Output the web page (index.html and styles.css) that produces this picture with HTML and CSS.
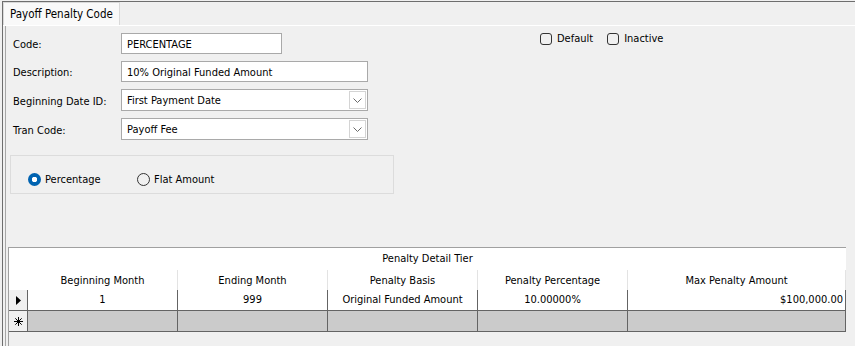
FILE: index.html
```html
<!DOCTYPE html>
<html>
<head>
    <title>Payoff Penalty Code</title>
    <link rel="stylesheet" href="styles.css">
</head>
<body>
    <div class="frame">
        <div class="tabs">
            <div class="tab">Payoff Penalty Code</div>
        </div>
        <div class="page">
            <div class="top">
                <div class="fields">
                    <label>Code:</label>
                    <div class="box code">PERCENTAGE</div>
                    <label>Description:</label>
                    <div class="box wide">10% Original Funded Amount</div>
                    <label>Beginning Date ID:</label>
                    <div class="box wide combo">First Payment Date
                        <span class="drop"><svg width="9" height="5" viewBox="0 0 9 5"><path d="M0.5 0.5 L4.5 4.5 L8.5 0.5" fill="none" stroke="#6a6a6a" stroke-width="1"/></svg></span>
                    </div>
                    <label>Tran Code:</label>
                    <div class="box wide combo">Payoff Fee
                        <span class="drop"><svg width="9" height="5" viewBox="0 0 9 5"><path d="M0.5 0.5 L4.5 4.5 L8.5 0.5" fill="none" stroke="#6a6a6a" stroke-width="1"/></svg></span>
                    </div>
                </div>
                <div class="flags">
                    <span class="flag"><span class="check"></span>Default</span>
                    <span class="flag"><span class="check"></span>Inactive</span>
                </div>
            </div>

            <div class="group">
                <span class="option"><span class="radio on"></span>Percentage</span>
                <span class="option"><span class="radio"></span>Flat Amount</span>
            </div>

            <div class="grid">
                <div class="grid-title">Penalty Detail Tier</div>
                <div class="row head">
                    <div class="cell rh"></div>
                    <div class="cell">Beginning Month</div>
                    <div class="cell">Ending Month</div>
                    <div class="cell">Penalty Basis</div>
                    <div class="cell">Penalty Percentage</div>
                    <div class="cell">Max Penalty Amount</div>
                </div>
                <div class="row data">
                    <div class="cell rh"><svg width="5" height="9" viewBox="0 0 5 9"><path d="M0 0 L5 4.5 L0 9 Z" fill="#000"/></svg></div>
                    <div class="cell">1</div>
                    <div class="cell">999</div>
                    <div class="cell">Original Funded Amount</div>
                    <div class="cell">10.00000%</div>
                    <div class="cell num">$100,000.00</div>
                </div>
                <div class="row new">
                    <div class="cell rh"><svg width="9" height="9" viewBox="0 0 9 9"><path d="M4.5 0 V9 M0 4.5 H9 M1.3 1.3 L7.7 7.7 M1.3 7.7 L7.7 1.3" stroke="#000" stroke-width="1"/></svg></div>
                    <div class="cell"></div>
                    <div class="cell"></div>
                    <div class="cell"></div>
                    <div class="cell"></div>
                    <div class="cell"></div>
                </div>
            </div>
        </div>
    </div>
</body>
</html>
```

FILE: styles.css
```css
body {
    margin: 0;
    background-color: #f0f0f0;
    font-family: Tahoma, "DejaVu Sans Condensed", "Liberation Sans", sans-serif;
    font-size: 11px;
    color: #000;
    height: 346px;
    overflow: hidden;
}

.frame {
    margin: 1px 0 0 2px;
    border-top: 1px solid #6e6e6e;
    border-left: 1px solid #6e6e6e;
    height: 344px;
}

.tabs {
    display: flex;
    height: 23px;
    border-bottom: 1px solid #ffffff;
}

.tab {
    background-color: #f9f9f9;
    border: 1px solid #d9d9d9;
    border-bottom: none;
    padding: 0 6px;
    line-height: 23px;
    font-size: 11.5px;
    white-space: nowrap;
}

.page {
    margin-left: 2px;
    border-left: 1px solid #a7a7a7;
    height: 330px;
}

.top {
    display: flex;
    padding-top: 7px;
}

.fields {
    margin-left: 7px;
    display: grid;
    grid-template-columns: 108px 247px;
    grid-template-rows: 21px 21px 22px 22px;
    row-gap: 7px;
    align-items: center;
}

.fields label {
    padding-top: 2px;
}

.box {
    box-sizing: border-box;
    height: 100%;
    background-color: #fff;
    border: 1px solid #a9a9a9;
    padding: 1px 5px 0;
    line-height: 19px;
    position: relative;
}

.code {
    width: 161px;
}

.drop {
    position: absolute;
    top: 1px;
    right: 1px;
    width: 17px;
    height: 18px;
    box-sizing: border-box;
    border: 1px solid #d4d4d4;
    display: flex;
    justify-content: center;
    align-items: center;
}

.flags {
    margin-left: 172px;
    display: flex;
    gap: 14px;
    height: 13px;
    margin-top: -1px;
}

.flag {
    display: flex;
    align-items: center;
    gap: 5px;
}

.check {
    width: 12px;
    height: 12px;
    box-sizing: border-box;
    border: 1px solid #333;
    border-radius: 3px;
}

.group {
    margin: 15px 0 0 4px;
    width: 384px;
    height: 39px;
    box-sizing: border-box;
    border: 1px solid #dcdcdc;
    padding: 17px 0 0 17px;
    display: flex;
}

.option {
    display: flex;
    align-items: center;
    gap: 4px;
    width: 109px;
    height: 13px;
}

.radio {
    width: 13px;
    height: 13px;
    box-sizing: border-box;
    border-radius: 50%;
    border: 1px solid #333;
}

.radio.on {
    border: none;
    background: radial-gradient(circle, #fff 0, #fff 2.5px, #0063b1 3px);
}

.grid {
    margin: 53px 0 0 2px;
    width: 838px;
    height: 100px;
    box-sizing: border-box;
    border-top: 1px solid #a0a0a0;
    border-left: 1px solid #a0a0a0;
}

.grid-title {
    background-color: #fff;
    height: 22px;
    line-height: 22px;
    text-align: center;
}

.row {
    display: grid;
    grid-template-columns: 19px 150px 150px 150px 150px 218px;
}

.cell {
    box-sizing: border-box;
    text-align: center;
    white-space: nowrap;
    overflow: hidden;
}

.head {
    background-color: #fff;
    height: 20px;
}

.head .cell {
    line-height: 21px;
    border-right: 1px solid #e3e3e3;
}

.head .rh {
    border-right: none;
}

.data .cell,
.new .cell {
    height: 21px;
    line-height: 20px;
    border-right: 1px solid #646464;
    border-bottom: 1px solid #646464;
    background-color: #fff;
}

.new .cell {
    background-color: #cbcbcb;
}

.data .rh,
.new .rh {
    background-color: #f0f0f0;
    display: flex;
    justify-content: center;
    align-items: center;
}

.num {
    text-align: right;
    padding-right: 2px;
}
```
